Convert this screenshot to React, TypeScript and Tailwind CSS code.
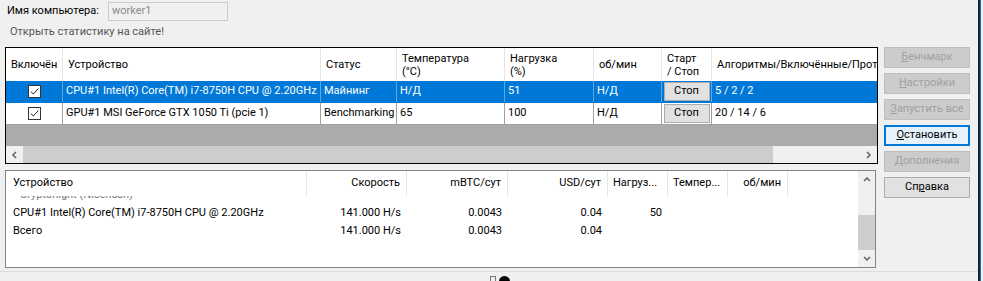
import React from 'react';

const font = { fontFamily: 'Roboto, "Liberation Sans", Arial, sans-serif' };

type Col = { label: React.ReactNode; w: string };

const topCols: Col[] = [
  { label: 'Включён', w: 'w-[57px]' },
  { label: 'Устройство', w: 'w-[258px]' },
  { label: 'Статус', w: 'w-[76px]' },
  { label: <>Температура<br />(°C)</>, w: 'w-[108px]' },
  { label: <>Нагрузка<br />(%)</>, w: 'w-[89px]' },
  { label: 'об/мин', w: 'w-[68px]' },
  { label: <>Старт<br />/ Стоп</>, w: 'w-[50px]' },
  { label: 'Алгоритмы/Включённые/Протестированные', w: 'flex-1' },
];

const rows = [
  {
    selected: true,
    cells: ['CPU#1 Intel(R) Core(TM) i7-8750H CPU @ 2.20GHz', 'Майнинг', 'Н/Д', '51', 'Н/Д', '5 / 2 / 2'],
  },
  {
    selected: false,
    cells: ['GPU#1 MSI GeForce GTX 1050 Ti (pcie 1)', 'Benchmarking', '65', '100', 'Н/Д', '20 / 14 / 6'],
  },
];

const Check = () => (
  <span className="w-[13px] h-[13px] bg-white border border-[#333] flex items-center justify-center">
    <svg width="9" height="9" viewBox="0 0 9 9">
      <path d="M0.8 4.6 L3.3 7 L8.3 1.6" fill="none" stroke="#222" strokeWidth="1" />
    </svg>
  </span>
);

const SideButton = ({ label, u, state }: { label: string; u: number; state: 'disabled' | 'focus' | 'normal' }) => {
  const base = 'h-[21px] w-[86px] flex items-center justify-center text-[11px] border whitespace-nowrap';
  const cls =
    state === 'disabled'
      ? 'bg-[#cccccc] border-[#bfbfbf] text-[#a0a0a0]'
      : state === 'focus'
      ? 'bg-[#e5f1fb] border-[#0078d7] border-2 text-black'
      : 'bg-[#e1e1e1] border-[#adadad] text-black';
  return (
    <div className={`${base} ${cls}`}>
      {label.slice(0, u)}
      <span className="underline">{label[u]}</span>
      {label.slice(u + 1)}
    </div>
  );
};

const Arrow = ({ dir }: { dir: 'l' | 'r' | 'u' | 'd' }) => {
  const d = {
    l: 'M5 1 L2 4 L5 7',
    r: 'M2 1 L5 4 L2 7',
    u: 'M1 5 L4 2 L7 5',
    d: 'M1 2 L4 5 L7 2',
  }[dir];
  return (
    <svg width="8" height="8" viewBox="0 0 8 8">
      <path d={d} fill="none" stroke="#606060" strokeWidth="1.5" />
    </svg>
  );
};

export default function App() {
  return (
    <div className="w-[983px] h-[281px] bg-[#f0f0f0] flex overflow-hidden text-[11px] text-black" style={font}>
      <div className="w-[978px] flex flex-col">
        {/* computer name */}
        <div className="flex items-center h-[19px] mt-[2px]">
          <span className="ml-[7px] w-[101px]">Имя компьютера:</span>
          <div className="w-[120px] h-[19px] border border-[#cccccc] bg-[#f0f0f0] text-[#8a8a8a] pl-[3px] flex items-center">
            worker1
          </div>
        </div>
        <div className="ml-[10px] mt-[3px] h-[15px] text-[#555] leading-[15px]">Открыть статистику на сайте!</div>

        <div className="flex mt-[8px]">
          <div className="flex flex-col ml-[5px] w-[873px]">
            {/* devices grid */}
            <div className="h-[117px] border border-black bg-[#ababab] flex flex-col overflow-hidden">
              <div className="flex h-[33px] bg-white shrink-0">
                {topCols.map((c, i) => (
                  <div
                    key={i}
                    className={`${c.w} ${i < 7 ? 'border-r border-[#e5e5e5]' : ''} px-[5px] flex items-center leading-[13px] whitespace-nowrap overflow-hidden`}
                  >
                    {c.label}
                  </div>
                ))}
              </div>
              {rows.map((r, ri) => (
                <div
                  key={ri}
                  className={`flex h-[22px] shrink-0 border-b ${
                    r.selected ? 'bg-[#0078d7] text-white border-[#0078d7]' : 'bg-white border-[#a0a0a0]'
                  }`}
                >
                  <div className={`w-[57px] flex items-center justify-center border-r ${r.selected ? 'border-[#5fa8e6]' : 'border-[#a0a0a0]'}`}>
                    <Check />
                  </div>
                  {r.cells.slice(0, 5).map((c, ci) => (
                    <div
                      key={ci}
                      className={`${topCols[ci + 1].w} px-[3px] flex items-center whitespace-nowrap overflow-hidden border-r ${
                        r.selected ? 'border-[#5fa8e6]' : 'border-[#a0a0a0]'
                      }`}
                    >
                      {c}
                    </div>
                  ))}
                  <div className={`w-[50px] flex items-center justify-center border-r ${r.selected ? 'border-[#5fa8e6]' : 'border-[#a0a0a0]'}`}>
                    <div className="w-[46px] h-[19px] bg-[#e1e1e1] border border-[#adadad] text-black flex items-center justify-center">
                      Стоп
                    </div>
                  </div>
                  <div className="flex-1 px-[3px] flex items-center whitespace-nowrap">{r.cells[5]}</div>
                </div>
              ))}
              <div className="flex-1" />
              {/* horizontal scrollbar */}
              <div className="h-[17px] bg-[#f0f0f0] flex items-center shrink-0">
                <div className="w-[17px] flex justify-center">
                  <Arrow dir="l" />
                </div>
                <div className="w-[750px] h-[17px] bg-[#cdcdcd]" />
                <div className="flex-1" />
                <div className="w-[17px] flex justify-center">
                  <Arrow dir="r" />
                </div>
              </div>
            </div>

            {/* stats panel */}
            <div className="mt-[6px] h-[98px] w-[871px] border border-[#828282] bg-white flex overflow-hidden">
              <div className="flex-1 flex flex-col">
                <div className="flex h-[25px] shrink-0 items-center">
                  <div className="w-[301px] pl-[7px] h-full flex items-center border-r border-[#e5e5e5]">Устройство</div>
                  <div className="w-[100px] pr-[6px] h-full flex items-center justify-end border-r border-[#e5e5e5]">Скорость</div>
                  <div className="w-[101px] pr-[6px] h-full flex items-center justify-end border-r border-[#e5e5e5]">mBTC/сут</div>
                  <div className="w-[100px] pr-[6px] h-full flex items-center justify-end border-r border-[#e5e5e5]">USD/сут</div>
                  <div className="w-[60px] pl-[5px] h-full flex items-center border-r border-[#e5e5e5]">Нагруз...</div>
                  <div className="w-[60px] pl-[5px] h-full flex items-center border-r border-[#e5e5e5]">Темпер...</div>
                  <div className="w-[60px] pr-[6px] h-full flex items-center justify-end border-r border-[#e5e5e5]">об/мин</div>
                </div>
                <div className="h-[5px] overflow-hidden">
                  <div className="pl-[14px] text-[#777] leading-[12px] -mt-[7px]">Cryptonight (Nicehash)</div>
                </div>
                <div className="flex h-[18px] mt-[3px] items-center">
                  <div className="w-[301px] pl-[7px] whitespace-nowrap">CPU#1 Intel(R) Core(TM) i7-8750H CPU @ 2.20GHz</div>
                  <div className="w-[100px] pr-[6px] text-right">141.000 H/s</div>
                  <div className="w-[101px] pr-[6px] text-right">0.0043</div>
                  <div className="w-[100px] pr-[6px] text-right">0.04</div>
                  <div className="w-[60px] pr-[6px] text-right">50</div>
                </div>
                <div className="flex h-[18px] items-center">
                  <div className="w-[301px] pl-[7px]">Всего</div>
                  <div className="w-[100px] pr-[6px] text-right">141.000 H/s</div>
                  <div className="w-[101px] pr-[6px] text-right">0.0043</div>
                  <div className="w-[100px] pr-[6px] text-right">0.04</div>
                </div>
              </div>
              {/* vertical scrollbar */}
              <div className="w-[17px] bg-[#f0f0f0] flex flex-col items-center">
                <div className="h-[17px] flex items-center">
                  <Arrow dir="u" />
                </div>
                <div className="h-[27px]" />
                <div className="w-[17px] h-[35px] bg-[#cdcdcd]" />
                <div className="flex-1" />
                <div className="h-[17px] flex items-center">
                  <Arrow dir="d" />
                </div>
              </div>
            </div>
          </div>

          {/* side buttons */}
          <div className="ml-[6px] flex flex-col gap-[5px]">
            <SideButton label="Бенчмарк" u={0} state="disabled" />
            <SideButton label="Настройки" u={0} state="disabled" />
            <SideButton label="Запустить все" u={0} state="disabled" />
            <SideButton label="Остановить" u={0} state="focus" />
            <SideButton label="Дополнения" u={0} state="disabled" />
            <SideButton label="Справка" u={2} state="normal" />
          </div>
        </div>

        {/* bottom status strip */}
        <div className="mt-[3px] border-t border-[#dcdcdc] flex-1 flex justify-center">
          <div className="ml-[22px] mt-[4px] flex items-start gap-[3px]">
            <div className="w-[6px] h-[7px] border border-[#777]" />
            <div className="w-[11px] h-[11px] rounded-full bg-black" />
          </div>
        </div>
      </div>
      <div className="w-[3px] bg-[#0d2a3a] border-r border-[#2d6f99]" />
    </div>
  );
}
